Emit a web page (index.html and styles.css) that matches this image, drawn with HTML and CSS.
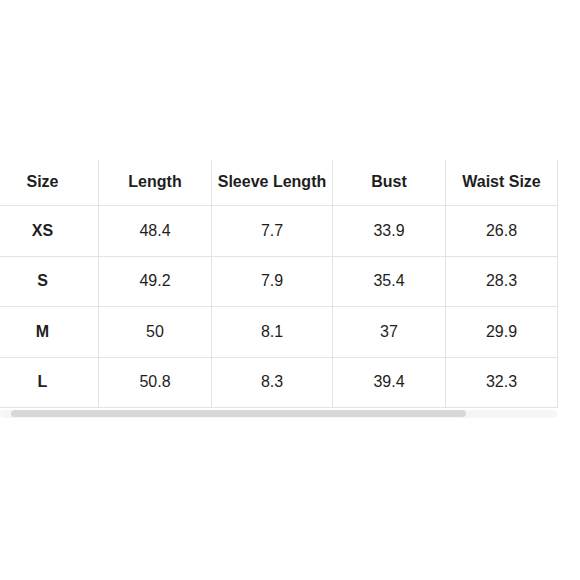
FILE: index.html
```html
<!DOCTYPE html>
<html>
<head>
<meta charset="utf-8">
<link rel="stylesheet" href="styles.css">
</head>
<body>
<div class="page">
  <div class="scroller">
    <table class="size-table">
      <colgroup>
        <col class="c1"><col class="c2"><col class="c3"><col class="c4"><col class="c5">
      </colgroup>
      <thead>
        <tr><th>Size</th><th>Length</th><th>Sleeve Length</th><th>Bust</th><th>Waist Size</th></tr>
      </thead>
      <tbody>
        <tr><th>XS</th><td>48.4</td><td>7.7</td><td>33.9</td><td>26.8</td></tr>
        <tr><th>S</th><td>49.2</td><td>7.9</td><td>35.4</td><td>28.3</td></tr>
        <tr><th>M</th><td>50</td><td>8.1</td><td>37</td><td>29.9</td></tr>
        <tr><th>L</th><td>50.8</td><td>8.3</td><td>39.4</td><td>32.3</td></tr>
      </tbody>
    </table>
  </div>
  <div class="scrollbar"><div class="thumb"></div></div>
</div>
</body>
</html>
```
FILE: styles.css
```css
html, body {
  margin: 0;
  padding: 0;
  background: #fff;
}
.page {
  padding-top: 160px;
  width: 560px;
}
.scroller {
  width: 560px;
  overflow: hidden;
}
.size-table {
  margin-left: -14px;
  border-collapse: collapse;
  table-layout: fixed;
  width: 571px;
  font-family: "Liberation Sans", Arial, sans-serif;
  font-size: 16px;
  color: #1e1e1e;
}
.c1 { width: 112px; }
.c2 { width: 113px; }
.c3 { width: 121px; }
.c4 { width: 113px; }
.c5 { width: 112px; }
.size-table th,
.size-table td {
  border: 1px solid #e3e3e3;
  text-align: center;
  padding: 0;
  height: 50px;
  box-sizing: border-box;
}
.size-table thead th {
  border-top: none;
  height: 45px;
  font-weight: bold;
}
.size-table tbody th {
  font-weight: bold;
}
.size-table td {
  font-weight: normal;
}
.size-table tbody tr:nth-child(odd) th,
.size-table tbody tr:nth-child(odd) td {
  height: 51px;
}
.scrollbar {
  margin-top: 2px;
  height: 8px;
  width: 557px;
  background: #f6f6f6;
  border-radius: 4px;
  display: flex;
}
.thumb {
  margin-left: 11px;
  width: 455px;
  height: 7px;
  background: #d8d8d8;
  border-radius: 4px;
}
```
